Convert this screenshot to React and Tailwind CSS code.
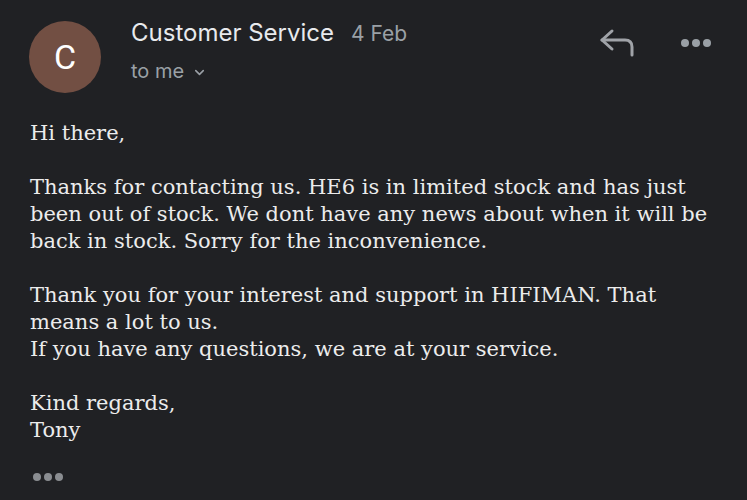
import { ChevronDown } from 'lucide-react';

export default function App() {
    return (
        <div className="w-[747px] h-[500px] overflow-hidden bg-[#202124] font-['Inter',sans-serif]">
            {/* Header */}
            <div className="flex items-start pl-[29px] pr-[36px] pt-[21px]">
                <div className="w-[72px] h-[72px] rounded-full bg-[#724f43] flex items-center justify-center text-white text-[34px] font-['Roboto',sans-serif] shrink-0">
                    C
                </div>
                <div className="ml-[30px] flex-1 -mt-[6px]">
                    <div className="flex items-baseline">
                        <span className="text-[24px] text-[#e8eaed]">Customer Service</span>
                        <span className="ml-[17px] text-[21px] text-[#9aa0a6]">4 Feb</span>
                    </div>
                    <div className="flex items-center mt-[5px] text-[20px] text-[#9aa0a6]">
                        <span>to me</span>
                        <ChevronDown className="w-[15px] h-[15px] ml-[8px] mt-[2px]" strokeWidth={2.5} />
                    </div>
                </div>
                <div className="flex items-center gap-[44px] pt-[7px]">
                    <svg width="38" height="30" viewBox="0 0 38 30" fill="none" stroke="#a0a3a8" strokeWidth="3" strokeLinecap="round" strokeLinejoin="round">
                        <path d="M13 3 L3 12 L13 21" />
                        <path d="M3 12 H26 Q33 12 33 19 V27" />
                    </svg>
                    <div className="flex gap-[3px]">
                        <span className="w-[8px] h-[8px] rounded-full bg-[#9aa0a6]" />
                        <span className="w-[8px] h-[8px] rounded-full bg-[#9aa0a6]" />
                        <span className="w-[8px] h-[8px] rounded-full bg-[#9aa0a6]" />
                    </div>
                </div>
            </div>

            {/* Body */}
            <div className="pl-[30px] pr-[10px] mt-[27px] font-['DejaVu_Serif',serif] text-[21px] leading-[27px] text-[#ececec]">
                <p className="mb-[27px]">Hi there,</p>
                <p className="mb-[27px]">
                    Thanks for contacting us. HE6 is in limited stock and has just<br />
                    been out of stock. We dont have any news about when it will be<br />
                    back in stock. Sorry for the inconvenience.
                </p>
                <p className="mb-[27px]">
                    Thank you for your interest and support in HIFIMAN. That<br />
                    means a lot to us.<br />
                    If you have any questions, we are at your service.
                </p>
                <p>
                    Kind regards,<br />
                    Tony
                </p>
                <div className="flex gap-[3px] mt-[29px] ml-[3px]">
                    <span className="w-[8px] h-[8px] rounded-full bg-[#8a8d91]" />
                    <span className="w-[8px] h-[8px] rounded-full bg-[#8a8d91]" />
                    <span className="w-[8px] h-[8px] rounded-full bg-[#8a8d91]" />
                </div>
            </div>
        </div>
    );
}
